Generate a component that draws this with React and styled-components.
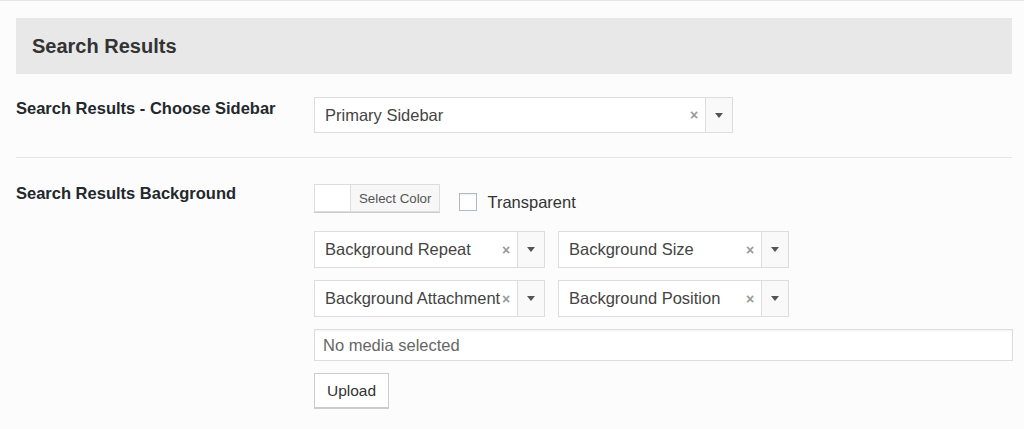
import styled, { createGlobalStyle } from "styled-components";

const Global = createGlobalStyle`
  body {
    margin: 0;
    background: #fcfcfc;
    font-family: "Liberation Sans", Arial, sans-serif;
    color: #23282d;
  }
`;

const Page = styled.div`
  width: 996px;
  padding: 0 12px 0 16px;
  height: 428px;
  overflow: hidden;
  border-top: 1px solid #e6e6e6;
  box-sizing: content-box;
`;

const Heading = styled.h2`
  margin: 17px 0 0;
  height: 56px;
  display: flex;
  align-items: center;
  padding-left: 16px;
  background: #e8e8e8;
  font-size: 20px;
  font-weight: 600;
  color: #333;
`;

const Row = styled.div`
  display: grid;
  grid-template-columns: 298px 1fr;
  padding: ${(p) => p.$pad};
  border-bottom: ${(p) => (p.$line ? "1px solid #e5e5e5" : "none")};
`;

const Label = styled.div`
  font-size: 16.5px;
  font-weight: 700;
  color: #23282d;
  padding-top: ${(p) => p.$top}px;
`;

const Fields = styled.div`
  display: flex;
  flex-direction: column;
  gap: ${(p) => p.$gap || 0}px;
  margin-top: ${(p) => p.$top || 0}px;
`;

const Line = styled.div`
  display: flex;
  align-items: center;
  gap: 13px;
`;

const SelectBox = styled.div`
  width: ${(p) => p.$w}px;
  height: ${(p) => p.$h}px;
  box-sizing: border-box;
  border: 1px solid #ddd;
  background: #fff;
  display: flex;
  align-items: center;
  font-size: 16.5px;
  color: #444;
`;

const SelectText = styled.span`
  flex: 1;
  min-width: 0;
  padding-left: 10px;
  white-space: nowrap;
`;

const Clear = styled.span`
  width: 22px;
  flex: none;
  text-align: center;
  color: #999;
  font-size: 14px;
  font-weight: 700;
`;

const Arrow = styled.span`
  width: 26px;
  flex: none;
  height: 100%;
  border-left: 1px solid #ddd;
  background: #f9f9f9;
  display: flex;
  align-items: center;
  justify-content: center;
  &::after {
    content: "";
    border-left: 4px solid transparent;
    border-right: 4px solid transparent;
    border-top: 5px solid #555;
  }
`;

const ColorPick = styled.div`
  display: flex;
  height: 28px;
  border: 1px solid #ddd;
  box-sizing: border-box;
  box-shadow: 0 1px 0 #ccc;
`;

const Swatch = styled.span`
  width: 35px;
  background: #fff;
  border-right: 1px solid #ddd;
`;

const ColorButton = styled.span`
  padding: 0 8px;
  display: flex;
  align-items: center;
  background: #f7f7f7;
  font-size: 13.3px;
  color: #555;
`;

const Check = styled.label`
  display: flex;
  align-items: center;
  gap: 10px;
  margin-left: 6px;
  margin-top: 8px;
  font-size: 16.5px;
  color: #333;
`;

const Box = styled.span`
  width: 18px;
  height: 18px;
  box-sizing: border-box;
  border: 1px solid #b4b9be;
  background: #fff;
  box-shadow: inset 0 1px 2px rgba(0, 0, 0, 0.07);
`;

const MediaInput = styled.div`
  width: 699px;
  height: 32px;
  box-sizing: border-box;
  border: 1px solid #ddd;
  background: #fff;
  display: flex;
  align-items: center;
  padding-left: 8px;
  font-size: 16.5px;
  color: #666;
  box-shadow: inset 0 1px 2px rgba(0, 0, 0, 0.05);
`;

const UploadButton = styled.button`
  align-self: flex-start;
  width: 75px;
  height: 35px;
  border: 1px solid #ccc;
  background: #fff;
  box-shadow: 0 1px 0 #ccc;
  font-family: inherit;
  font-size: 15.5px;
  color: #333;
  margin-top: 12px;
  padding: 0;
`;

const Select = ({ w, h = 37, children }) => (
  <SelectBox $w={w} $h={h}>
    <SelectText>{children}</SelectText>
    <Clear>×</Clear>
    <Arrow />
  </SelectBox>
);

export default function App() {
  return (
    <>
      <Global />
      <Page>
        <Heading>Search Results</Heading>
        <Row $pad="23px 0 24px" $line>
          <Label $top={2}>Search Results - Choose Sidebar</Label>
          <Select w={419} h={36}>Primary Sidebar</Select>
        </Row>
        <Row $pad="26px 0 0">
          <Label $top={0}>Search Results Background</Label>
          <Fields>
            <Line>
              <ColorPick>
                <Swatch />
                <ColorButton>Select Color</ColorButton>
              </ColorPick>
              <Check>
                <Box />
                Transparent
              </Check>
            </Line>
            <Fields $gap={12} $top={19}>
              <Line>
                <Select w={231}>Background Repeat</Select>
                <Select w={231}>Background Size</Select>
              </Line>
              <Line>
                <Select w={231}>Background Attachment</Select>
                <Select w={231}>Background Position</Select>
              </Line>
              <MediaInput>No media selected</MediaInput>
            </Fields>
            <UploadButton>Upload</UploadButton>
          </Fields>
        </Row>
      </Page>
    </>
  );
}
